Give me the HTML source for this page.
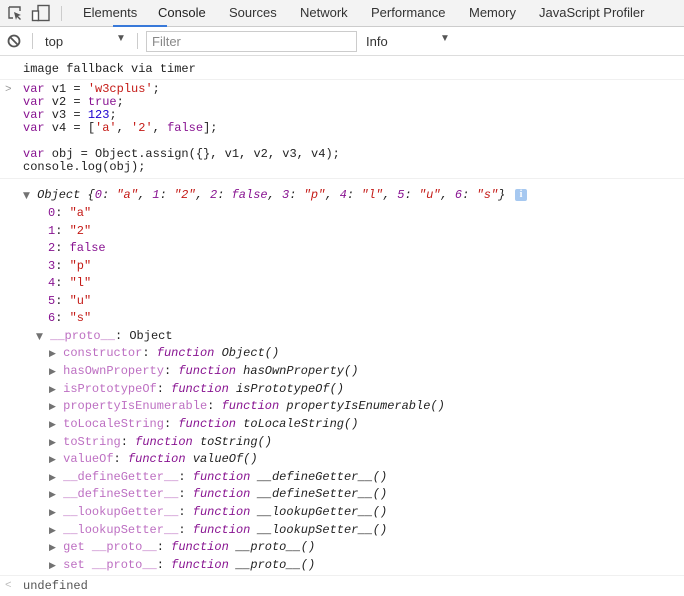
<!DOCTYPE html>
<html><head><meta charset="utf-8"><style>
*{margin:0;padding:0;box-sizing:border-box}
body{width:684px;height:596px;overflow:hidden;background:#fff;font-family:"Liberation Sans",sans-serif;position:relative}
.tb{position:absolute;left:0;top:0;width:684px;height:27px;background:#f3f3f3;border-bottom:1px solid #ccc}
.tab{position:absolute;top:5px;font-size:13px;color:#333}
.fb{position:absolute;left:0;top:27px;width:684px;height:29px;background:#fff;border-bottom:1px solid #ddd}
.m{position:absolute;font-family:"Liberation Mono",monospace;font-size:12px;line-height:14px;white-space:pre;color:#222}
.k{color:#881391}.s{color:#c41a16}.n{color:#1c00cf}.p{color:#bd6fc2}.i{font-style:italic}
.tri{color:#727272;font-size:9px;font-family:"DejaVu Sans",sans-serif}
.sep{position:absolute;left:0;width:684px;height:1px;background:#f0f0f0}
</style></head><body>
<div class="tb">
<svg style="position:absolute;left:7px;top:5px" width="16" height="16" viewBox="0 0 16 16"><path d="M2 2h11v4M2 2v11h4" fill="none" stroke="#555" stroke-width="1.4"/><path d="M7 7l7 3-3 1 3 3-1 1-3-3-1 3z" fill="#555"/></svg>
<svg style="position:absolute;left:31px;top:4px" width="20" height="18" viewBox="0 0 20 18"><rect x="7" y="1.5" width="11" height="15" fill="none" stroke="#555" stroke-width="1.4"/><rect x="1.5" y="7" width="6" height="9.5" fill="#fff" stroke="#555" stroke-width="1.4"/></svg>
<div style="position:absolute;left:61px;top:6px;width:1px;height:15px;background:#ccc"></div>
<span class="tab" style="left:83px">Elements</span>
<span class="tab" style="left:158px;color:#222">Console</span>
<div style="position:absolute;left:113px;top:25px;width:54px;height:2px;background:#3879d9"></div>
<span class="tab" style="left:229px">Sources</span>
<span class="tab" style="left:300px">Network</span>
<span class="tab" style="left:371px">Performance</span>
<span class="tab" style="left:469px">Memory</span>
<span class="tab" style="left:539px">JavaScript Profiler</span>
</div>
<div class="fb">
<svg style="position:absolute;left:7px;top:7px" width="14" height="14" viewBox="0 0 14 14"><circle cx="7" cy="7" r="5.5" fill="none" stroke="#555" stroke-width="1.8"/><path d="M3 3l8 8" stroke="#555" stroke-width="1.8"/></svg>
<div style="position:absolute;left:32px;top:6px;width:1px;height:16px;background:#ccc"></div>
<span style="position:absolute;left:45px;top:7px;font-size:13px;color:#333">top</span>
<span style="position:absolute;left:116px;top:6px;font-size:10px;color:#555">▼</span>
<div style="position:absolute;left:137px;top:6px;width:1px;height:16px;background:#ccc"></div>
<div style="position:absolute;left:146px;top:4px;width:211px;height:21px;border:1px solid #ccc"></div>
<span style="position:absolute;left:152px;top:7px;font-size:13px;color:#888">Filter</span>
<span style="position:absolute;left:366px;top:7px;font-size:13px;color:#333">Info</span>
<span style="position:absolute;left:440px;top:6px;font-size:10px;color:#555">▼</span>
</div>
<div class="m" style="left:23px;top:62px">image fallback via timer</div>
<div class="sep" style="top:79px"></div>
<div class="m" style="left:5px;top:83px;color:#999;font-size:11px">&gt;</div>
<div class="m" style="left:23px;top:83px;line-height:13px"><span class="k">var</span> v1 = <span class="s">'w3cplus'</span>;
<span class="k">var</span> v2 = <span class="k">true</span>;
<span class="k">var</span> v3 = <span class="n">123</span>;
<span class="k">var</span> v4 = [<span class="s">'a'</span>, <span class="s">'2'</span>, <span class="k">false</span>];

<span class="k">var</span> obj = Object.assign({}, v1, v2, v3, v4);
console.log(obj);</div>
<div class="sep" style="top:178px"></div>
<div class="m" style="left:23px;top:188px"><span class="tri">▼</span> <span class="i">Object {<span class="k">0</span>: <span class="s">"a"</span>, <span class="k">1</span>: <span class="s">"2"</span>, <span class="k">2</span>: <span class="k">false</span>, <span class="k">3</span>: <span class="s">"p"</span>, <span class="k">4</span>: <span class="s">"l"</span>, <span class="k">5</span>: <span class="s">"u"</span>, <span class="k">6</span>: <span class="s">"s"</span>}</span></div>
<div style="position:absolute;left:515px;top:189px;width:12px;height:12px;background:#a6c8f0;border-radius:2px;color:#fff;font-size:10px;font-weight:bold;text-align:center;line-height:12px;font-family:'Liberation Serif',serif">i</div>
<div class="m" style="left:48px;top:206px"><span class="k">0</span>: <span class="s">"a"</span></div>
<div class="m" style="left:48px;top:224px"><span class="k">1</span>: <span class="s">"2"</span></div>
<div class="m" style="left:48px;top:241px"><span class="k">2</span>: <span class="k">false</span></div>
<div class="m" style="left:48px;top:259px"><span class="k">3</span>: <span class="s">"p"</span></div>
<div class="m" style="left:48px;top:276px"><span class="k">4</span>: <span class="s">"l"</span></div>
<div class="m" style="left:48px;top:294px"><span class="k">5</span>: <span class="s">"u"</span></div>
<div class="m" style="left:48px;top:311px"><span class="k">6</span>: <span class="s">"s"</span></div>
<div class="m" style="left:36px;top:329px"><span class="tri">▼</span> <span class="p">__proto__</span>: Object</div>
<div class="m" style="left:49px;top:346px"><span class="tri">▶</span> <span class="p">constructor</span>: <span class="k i">function</span> <span class="i">Object()</span></div>
<div class="m" style="left:49px;top:364px"><span class="tri">▶</span> <span class="p">hasOwnProperty</span>: <span class="k i">function</span> <span class="i">hasOwnProperty()</span></div>
<div class="m" style="left:49px;top:382px"><span class="tri">▶</span> <span class="p">isPrototypeOf</span>: <span class="k i">function</span> <span class="i">isPrototypeOf()</span></div>
<div class="m" style="left:49px;top:399px"><span class="tri">▶</span> <span class="p">propertyIsEnumerable</span>: <span class="k i">function</span> <span class="i">propertyIsEnumerable()</span></div>
<div class="m" style="left:49px;top:417px"><span class="tri">▶</span> <span class="p">toLocaleString</span>: <span class="k i">function</span> <span class="i">toLocaleString()</span></div>
<div class="m" style="left:49px;top:435px"><span class="tri">▶</span> <span class="p">toString</span>: <span class="k i">function</span> <span class="i">toString()</span></div>
<div class="m" style="left:49px;top:452px"><span class="tri">▶</span> <span class="p">valueOf</span>: <span class="k i">function</span> <span class="i">valueOf()</span></div>
<div class="m" style="left:49px;top:470px"><span class="tri">▶</span> <span class="p">__defineGetter__</span>: <span class="k i">function</span> <span class="i">__defineGetter__()</span></div>
<div class="m" style="left:49px;top:487px"><span class="tri">▶</span> <span class="p">__defineSetter__</span>: <span class="k i">function</span> <span class="i">__defineSetter__()</span></div>
<div class="m" style="left:49px;top:505px"><span class="tri">▶</span> <span class="p">__lookupGetter__</span>: <span class="k i">function</span> <span class="i">__lookupGetter__()</span></div>
<div class="m" style="left:49px;top:523px"><span class="tri">▶</span> <span class="p">__lookupSetter__</span>: <span class="k i">function</span> <span class="i">__lookupSetter__()</span></div>
<div class="m" style="left:49px;top:540px"><span class="tri">▶</span> <span class="p">get __proto__</span>: <span class="k i">function</span> <span class="i">__proto__()</span></div>
<div class="m" style="left:49px;top:558px"><span class="tri">▶</span> <span class="p">set __proto__</span>: <span class="k i">function</span> <span class="i">__proto__()</span></div>
<div class="sep" style="top:575px"></div>
<div class="m" style="left:5px;top:579px;color:#bbb;font-size:11px">&lt;</div>
<div class="m" style="left:23px;top:579px;color:#555">undefined</div>
</body></html>
